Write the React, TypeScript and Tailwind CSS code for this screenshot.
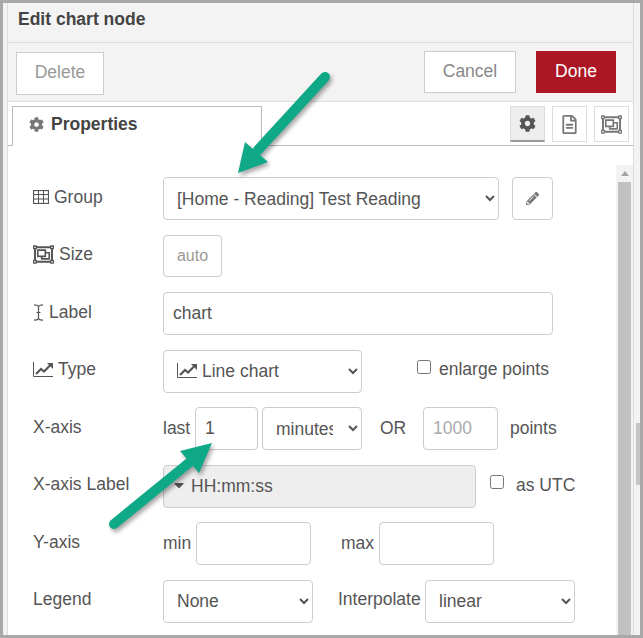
import { FaCaretDown, FaCog, FaPencilAlt, FaRegFileAlt, FaRegObjectGroup } from 'react-icons/fa';

const inputClass = 'h-[43px] rounded-[4px] border border-[#ccc] px-[9px] text-[#555] outline-none placeholder:text-[#aaa]';
const selectClass = 'h-[43px] rounded-[4px] border border-[#ccc] bg-white pl-[9px] text-[#555] outline-none';

const LineChartIcon = () => (
  <svg width="20" height="15" viewBox="0 0 20 15" fill="none" stroke="currentColor">
    <path d="M0.5 0v14.5H20" strokeWidth="1" />
    <path d="M3 12l5-5 3 2.5 6-6" strokeWidth="2.2" />
    <path d="M14 1h6v6z" fill="currentColor" stroke="none" />
  </svg>
);

const GridIcon = () => (
  <svg width="16" height="14" viewBox="0 0 16 14" fill="none" stroke="currentColor" strokeWidth="1">
    <rect x="0.5" y="0.5" width="15" height="13" strokeWidth="1.2" />
    <path d="M0 4.5h16M0 9h16M5.5 0v14M10.5 0v14" />
  </svg>
);

const CursorIcon = () => (
  <svg width="11" height="17" viewBox="0 0 11 17" fill="none" stroke="currentColor" strokeWidth="1.2">
    <path d="M1 0.8c2.2 0 3.6 0.4 4.5 1.6 0.9-1.2 2.3-1.6 4.5-1.6M5.5 2.4v12.2M1 16.2c2.2 0 3.6-0.4 4.5-1.6 0.9 1.2 2.3 1.6 4.5 1.6M3.5 8.5h4" />
  </svg>
);

const Arrow = ({ line, head }: { line: string; head: string }) => (
  <svg
    width="643"
    height="638"
    viewBox="0 0 643 638"
    className="pointer-events-none absolute top-0 left-0 drop-shadow-[2px_3px_2px_rgba(0,0,0,0.35)]"
  >
    <path d={line} stroke="#0fa987" strokeWidth="10" strokeLinecap="round" fill="none" />
    <polygon points={head} fill="#0fa987" />
  </svg>
);

const Row = ({ label, icon, children }: { label: string; icon?: React.ReactNode; children: React.ReactNode }) => (
  <div className="flex h-[43px] items-center">
    <label className="flex w-[130px] shrink-0 items-center gap-[5px] pb-[3px]">
      {icon}
      {label}
    </label>
    {children}
  </div>
);

const TabButton = ({ active, children }: { active?: boolean; children: React.ReactNode }) => (
  <button
    className={
      active
        ? 'flex h-[36px] w-[35px] items-center justify-center border border-[#ddd] border-b-[2px] border-b-[#999] bg-[#eee] text-[#555]'
        : 'flex h-[36px] w-[35px] items-center justify-center border border-[#ddd] bg-white text-[#777]'
    }
  >
    {children}
  </button>
);

export default function App() {
  return (
    <div className="relative flex h-[638px] w-[643px] overflow-hidden bg-[#a8a8a8] p-[3px] font-['Liberation_Sans',Arial,sans-serif] text-[17.5px] text-[#555]">
      <div className="flex flex-1 bg-[#f3f3f3] pl-[4px]">
        <div className="flex w-[627px] flex-col border-x border-[#ddd] bg-white">
          <div className="flex h-[40px] shrink-0 items-center border-b border-[#ddd] bg-[#f3f3f3] pb-[6px] pl-[10px] font-bold text-[#444]">
            Edit chart node
          </div>
          <div className="flex h-[59px] shrink-0 items-start border-b border-[#ddd] bg-[#f3f3f3] pr-[17px] pl-[8px]">
            <button className="mt-[9px] h-[43px] w-[88px] border border-[#ccc] bg-white pb-[2px] text-[#999]">Delete</button>
            <button className="mt-[8px] ml-auto h-[42px] w-[92px] border border-[#ccc] bg-white pb-[2px] text-[#888]">Cancel</button>
            <button className="mt-[8px] ml-[20px] h-[42px] w-[80px] bg-[#ad1625] pb-[2px] text-white">Done</button>
          </div>
          <div className="relative flex h-[44px] shrink-0 items-end border-b border-[#bbb] pr-[4px] pl-[4px]">
            <div className="-mb-px flex h-[40px] w-[250px] items-center gap-[7px] border border-b-0 border-[#bbb] bg-white pb-[5px] pl-[16px] font-bold text-[#444]">
              <FaCog className="text-[15px] text-[#777]" />
              Properties
            </div>
            <div className="mb-[3px] ml-auto flex gap-[7px]">
              <TabButton active>
                <FaCog className="text-[17px]" />
              </TabButton>
              <TabButton>
                <FaRegFileAlt className="text-[19px]" />
              </TabButton>
              <TabButton>
                <FaRegObjectGroup className="text-[21px]" />
              </TabButton>
            </div>
          </div>
          <div className="flex min-h-0 flex-1">
            <div className="flex w-[608px] shrink-0 flex-col gap-[14.5px] pt-[31px] pl-[25px]">
              <Row label="Group" icon={<GridIcon />}>
                <select className={`${selectClass} w-[336px]`} defaultValue="test">
                  <option value="test">[Home - Reading] Test Reading</option>
                </select>
                <button className="ml-[13px] flex h-[43px] w-[41px] items-center justify-center rounded-[4px] border border-[#ccc] bg-white text-[#777]">
                  <FaPencilAlt className="text-[13px]" />
                </button>
              </Row>
              <Row label="Size" icon={<FaRegObjectGroup className="text-[21px]" />}>
                <button className="h-[42px] w-[59px] rounded-[4px] border border-[#ccc] bg-white text-[16px] text-[#999]">auto</button>
              </Row>
              <Row label="Label" icon={<CursorIcon />}>
                <input className={`${inputClass} w-[390px] bg-white`} defaultValue="chart" />
              </Row>
              <Row label="Type" icon={<LineChartIcon />}>
                <div className="relative">
                  <select className={`${selectClass} w-[199px] pl-[34px]`} defaultValue="line">
                    <option value="line">Line chart</option>
                  </select>
                  <span className="absolute top-[13px] left-[14px] text-[#555]">
                    <LineChartIcon />
                  </span>
                </div>
                <input type="checkbox" className="mt-[-8px] ml-[55px] h-[14px] w-[14px]" />
                <span className="ml-[8px] pb-[3px]">enlarge points</span>
              </Row>
              <Row label="X-axis">
                <span className="w-[32px]">last</span>
                <input className={`${inputClass} w-[63px] bg-white`} defaultValue="1" />
                <select className={`${selectClass} ml-[4px] w-[100px] pr-[12px]`} defaultValue="minutes">
                  <option value="minutes">minutes</option>
                </select>
                <span className="ml-[18px] w-[43px]">OR</span>
                <input className={`${inputClass} w-[75px] bg-white`} placeholder="1000" />
                <span className="ml-[12px]">points</span>
              </Row>
              <Row label="X-axis Label">
                <div className="relative">
                  <input className={`${inputClass} w-[313px] bg-[#eee] pl-[27px]`} defaultValue="HH:mm:ss" readOnly />
                  <FaCaretDown className="absolute top-[12px] left-[8px] text-[16px] text-[#555]" />
                </div>
                <input type="checkbox" className="mt-[-8px] ml-[14px] h-[14px] w-[14px]" />
                <span className="ml-[12px] pb-[2px]">as UTC</span>
              </Row>
              <Row label="Y-axis">
                <span className="w-[33px]">min</span>
                <input className={`${inputClass} w-[115px] bg-white`} />
                <span className="ml-[30px] w-[38px]">max</span>
                <input className={`${inputClass} w-[115px] bg-white`} />
              </Row>
              <Row label="Legend">
                <select className={`${selectClass} w-[150px]`} defaultValue="none">
                  <option value="none">None</option>
                </select>
                <span className="ml-[25px] w-[87px] pb-[3px]">Interpolate</span>
                <select className={`${selectClass} w-[150px]`} defaultValue="linear">
                  <option value="linear">linear</option>
                </select>
              </Row>
            </div>
            <div className="mt-[19px] flex w-[17px] shrink-0 flex-col items-center bg-[#f3f3f3]">
              <div className="mt-[6px] mb-[6px] h-0 w-0 border-x-[4px] border-b-[5px] border-x-transparent border-b-[#a3a3a3]" />
              <div className="w-[13px] flex-1 bg-[#c1c1c1]" />
            </div>
          </div>
        </div>
        <div className="flex-1 pl-[2px]">
          <div className="mt-[420px] h-[62px] w-[4px] bg-[#c4c4c4]" />
        </div>
      </div>
      <Arrow line="M325 77L258 150" head="238,173 245,142 268,162" />
      <Arrow line="M114 524L190 462" head="212,443 180,451 199,473" />
    </div>
  );
}
